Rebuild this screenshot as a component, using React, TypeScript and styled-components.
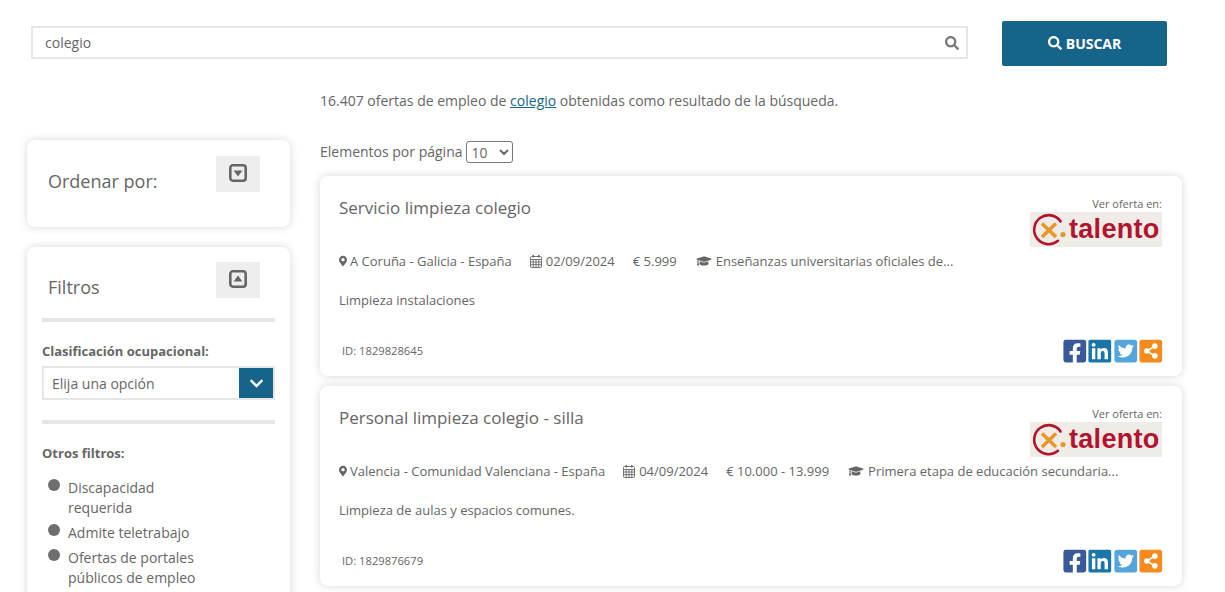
import React from 'react';
import styled, { createGlobalStyle } from 'styled-components';
import {
  FaSearch,
  FaMapMarkerAlt,
  FaGraduationCap,
  FaFacebookSquare,
  FaLinkedin,
  FaTwitterSquare,
  FaShareAltSquare,
  FaChevronDown,
} from 'react-icons/fa';

const GlobalStyle = createGlobalStyle`
  html, body {
    margin: 0;
    padding: 0;
    background: #fff;
    overflow: hidden;
  }
  body {
    font-family: "Open Sans", "Liberation Sans", sans-serif;
    font-size: 13px;
    color: #666;
  }
`;

const Page = styled.div`
  width: 1225px;
  height: 592px;
  overflow: hidden;
  box-sizing: border-box;
  padding-top: 21px;
`;

const SearchRow = styled.div`
  display: flex;
  align-items: flex-start;
  gap: 34px;
  margin-left: 31px;
`;

const SearchBox = styled.div`
  width: 937px;
  height: 33px;
  margin-top: 5px;
  box-sizing: border-box;
  border: 2px solid #e6e6e6;
  display: flex;
  align-items: center;
  justify-content: space-between;
  padding: 0 7px 0 12px;
  font-size: 14px;
  svg {
    width: 14px;
    height: 14px;
    color: #777;
  }
`;

const SearchButton = styled.button`
  width: 165px;
  height: 45px;
  border: 0;
  border-radius: 2px;
  background: #17648a;
  color: #fff;
  font-family: inherit;
  font-size: 14px;
  font-weight: 700;
  display: flex;
  align-items: center;
  justify-content: center;
  gap: 4px;
  padding-bottom: 2px;
  svg {
    width: 14px;
    height: 14px;
  }
`;

const Columns = styled.div`
  display: flex;
  gap: 30px;
  margin-left: 27px;
`;

const Sidebar = styled.aside`
  width: 263px;
  padding-top: 74px;
  display: flex;
  flex-direction: column;
  gap: 20px;
`;

const SideCard = styled.section<{ $top: number }>`
  background: #fff;
  border-radius: 8px;
  box-shadow: 0 0 8px rgba(0, 0, 0, 0.16);
  padding: ${(p) => p.$top}px 15px 20px;
  min-height: 87px;
  box-sizing: border-box;
`;

const SideHeader = styled.div`
  display: flex;
  justify-content: space-between;
  align-items: flex-start;
  padding: 0 15px 0 6px;
`;

const SideTitle = styled.h2`
  margin: 0;
  padding-top: 13px;
  font-size: 18px;
  font-weight: 400;
  line-height: 24px;
  color: #666;
`;

const ToggleButton = styled.div`
  width: 44px;
  height: 36px;
  background: #eeeeee;
  display: flex;
  justify-content: center;
  padding-top: 8px;
  box-sizing: border-box;
  svg {
    width: 18px;
    height: 18px;
  }
`;

const Rule = styled.hr<{ $top: number }>`
  border: 0;
  height: 4px;
  background: #e6e6e6;
  margin: ${(p) => p.$top}px 0 0;
`;

const FieldLabel = styled.div`
  margin-top: 20px;
  font-size: 13px;
  line-height: 18px;
  font-weight: 700;
`;

const SelectBox = styled.div`
  margin-top: 6px;
  height: 34px;
  box-sizing: border-box;
  border: 2px solid #e6e6e6;
  display: flex;
  align-items: center;
  justify-content: space-between;
  padding-left: 8px;
  font-size: 14px;
`;

const SelectArrow = styled.span`
  width: 34px;
  height: 30px;
  background: #17648a;
  color: #fff;
  display: flex;
  align-items: center;
  justify-content: center;
  svg {
    width: 15px;
    height: 15px;
  }
`;

const FilterList = styled.ul`
  list-style: none;
  margin: 16px 0 0;
  padding: 0 0 0 26px;
`;

const FilterItem = styled.li`
  position: relative;
  width: 150px;
  font-size: 14px;
  line-height: 20px;
  margin-bottom: 5px;
  &::before {
    content: '';
    position: absolute;
    left: -20px;
    top: 1px;
    width: 12px;
    height: 12px;
    border-radius: 50%;
    background: #6e6e6e;
  }
`;

const Results = styled.main`
  width: 862px;
`;

const ResultCount = styled.p`
  margin: 24px 0 0;
  font-size: 14px;
  line-height: 22px;
  a {
    color: #17648a;
    text-decoration: underline;
  }
`;

const PerPage = styled.div`
  margin-top: 28px;
  display: flex;
  align-items: center;
  gap: 3px;
  height: 22px;
  font-size: 14px;
`;

const PerPageSelect = styled.select`
  width: 47px;
  height: 22px;
  margin-top: 2px;
  font-family: inherit;
  font-size: 14px;
  color: #666;
  background: #fff;
  border: 1px solid #777;
  border-radius: 3px;
  padding-left: 1px;
`;

const OfferList = styled.div`
  margin-top: 14px;
  display: flex;
  flex-direction: column;
  gap: 10px;
`;

const OfferCard = styled.article`
  height: 200px;
  box-sizing: border-box;
  border-radius: 8px;
  background: #fff;
  box-shadow: 0 0 8px rgba(0, 0, 0, 0.16);
  padding: 20px 20px 12px 19px;
  display: flex;
  flex-direction: column;
`;

const OfferTop = styled.div`
  display: flex;
  justify-content: space-between;
  height: 53px;
`;

const OfferTitle = styled.h3`
  margin: 0;
  font-size: 17px;
  font-weight: 400;
  line-height: 24px;
  color: #666;
`;

const Source = styled.div`
  width: 132px;
  text-align: right;
  font-size: 11px;
  line-height: 15px;
`;

const Logo = styled.div`
  margin-top: 1px;
  height: 35px;
  background: #efebe6;
  display: flex;
  align-items: center;
  padding-left: 2px;
  svg {
    width: 34px;
    height: 34px;
    flex: none;
  }
`;

const LogoText = styled.span`
  margin-left: 3px;
  font-family: "Liberation Sans", sans-serif;
  font-weight: 700;
  font-size: 27px;
  line-height: 35px;
  letter-spacing: 0.3px;
  color: #b2132e;
`;

const MetaRow = styled.div`
  display: flex;
  align-items: center;
  gap: 18px;
  height: 24px;
  font-size: 13px;
  svg {
    margin-right: 4px;
    vertical-align: -1px;
  }
`;

const MetaPin = styled.span`
  svg {
    width: 8px;
    height: 12px;
    margin-right: 3px;
  }
`;

const MetaDate = styled.span`
  svg {
    width: 12px;
    height: 13px;
    margin-right: 4px;
    vertical-align: -2px;
  }
`;

const MetaCap = styled.span`
  margin-left: 1px;
  svg {
    width: 16px;
    height: 12px;
  }
`;

const Description = styled.p`
  margin: 17px 0 0;
  font-size: 13px;
  line-height: 20px;
`;

const OfferFooter = styled.div`
  margin-top: auto;
  display: flex;
  justify-content: space-between;
  align-items: center;
`;

const OfferId = styled.span`
  margin: 0 0 2px 3px;
  font-size: 11.2px;
`;

const Shares = styled.div`
  display: flex;
  margin-right: -2px;
  height: 26px;
  svg {
    width: 25.6px;
    height: 26px;
  }
`;

type Offer = {
  title: string;
  place: string;
  date: string;
  salary: string;
  study: string;
  text: string;
  id: string;
};

const offers: Offer[] = [
  {
    title: 'Servicio limpieza colegio',
    place: 'A Coruña - Galicia - España',
    date: '02/09/2024',
    salary: '€ 5.999',
    study: 'Enseñanzas universitarias oficiales de...',
    text: 'Limpieza instalaciones',
    id: '1829828645',
  },
  {
    title: 'Personal limpieza colegio - silla',
    place: 'Valencia - Comunidad Valenciana - España',
    date: '04/09/2024',
    salary: '€ 10.000 - 13.999',
    study: 'Primera etapa de educación secundaria...',
    text: 'Limpieza de aulas y espacios comunes.',
    id: '1829876679',
  },
];

const LogoMark = () => (
  <svg viewBox="0 0 34 34">
    <path d="M28.6 8.4 A14.5 14.5 0 1 0 26 27.8" fill="none" stroke="#b2132e" strokeWidth="2.6" strokeLinecap="round" />
    <path d="M10 10.5 L24 24 M24 10.5 L10 24" stroke="#e8962a" strokeWidth="3.6" />
    <circle cx="31" cy="21.5" r="2.6" fill="#e8962a" />
  </svg>
);

const CalendarIcon = () => (
  <svg viewBox="0 0 12 13" fill="none" stroke="#666" strokeWidth="0.9">
    <rect x="0.5" y="1.5" width="11" height="11" rx="1" />
    <path d="M0.5 4.5 H11.5 M0.5 7 H11.5 M0.5 9.7 H11.5 M3.2 4.5 V12.5 M6 4.5 V12.5 M8.8 4.5 V12.5" />
    <path d="M3.2 0 V2.6 M8.8 0 V2.6" strokeWidth="1.4" />
  </svg>
);

const CaretSquare = ({ up }: { up?: boolean }) => (
  <svg viewBox="0 0 18 18">
    <rect x="1.3" y="1.3" width="15.4" height="15.4" rx="2.6" fill="none" stroke="#666" strokeWidth="2.6" />
    <path d={up ? 'M9 5.4 L13.4 11.4 H4.6 Z' : 'M9 12.6 L4.6 6.6 H13.4 Z'} fill="#666" />
  </svg>
);

const App = () => (
  <Page>
    <GlobalStyle />
    <SearchRow>
      <SearchBox>
        colegio
        <FaSearch />
      </SearchBox>
      <SearchButton>
        <FaSearch />
        BUSCAR
      </SearchButton>
    </SearchRow>
    <Columns>
      <Sidebar>
        <SideCard $top={16}>
          <SideHeader>
            <SideTitle>Ordenar por:</SideTitle>
            <ToggleButton>
              <CaretSquare />
            </ToggleButton>
          </SideHeader>
        </SideCard>
        <SideCard $top={15}>
          <SideHeader>
            <SideTitle>Filtros</SideTitle>
            <ToggleButton>
              <CaretSquare up />
            </ToggleButton>
          </SideHeader>
          <Rule $top={19} />
          <FieldLabel>Clasificación ocupacional:</FieldLabel>
          <SelectBox>
            Elija una opción
            <SelectArrow>
              <FaChevronDown />
            </SelectArrow>
          </SelectBox>
          <Rule $top={20} />
          <FieldLabel>Otros filtros:</FieldLabel>
          <FilterList>
            <FilterItem>Discapacidad requerida</FilterItem>
            <FilterItem>Admite teletrabajo</FilterItem>
            <FilterItem>Ofertas de portales públicos de empleo</FilterItem>
          </FilterList>
        </SideCard>
      </Sidebar>
      <Results>
        <ResultCount>
          16.407 ofertas de empleo de <a href="#">colegio</a> obtenidas como resultado de la búsqueda.
        </ResultCount>
        <PerPage>
          Elementos por página
          <PerPageSelect defaultValue="10">
            <option>10</option>
          </PerPageSelect>
        </PerPage>
        <OfferList>
          {offers.map((offer) => (
            <OfferCard key={offer.id}>
              <OfferTop>
                <OfferTitle>{offer.title}</OfferTitle>
                <Source>
                  Ver oferta en:
                  <Logo>
                    <LogoMark />
                    <LogoText>talento</LogoText>
                  </Logo>
                </Source>
              </OfferTop>
              <MetaRow>
                <MetaPin>
                  <FaMapMarkerAlt />
                  {offer.place}
                </MetaPin>
                <MetaDate>
                  <CalendarIcon />
                  {offer.date}
                </MetaDate>
                <span>{offer.salary}</span>
                <MetaCap>
                  <FaGraduationCap />
                  {offer.study}
                </MetaCap>
              </MetaRow>
              <Description>{offer.text}</Description>
              <OfferFooter>
                <OfferId>ID: {offer.id}</OfferId>
                <Shares>
                  <FaFacebookSquare color="#3b5998" />
                  <FaLinkedin color="#1a75a8" />
                  <FaTwitterSquare color="#55a5dc" />
                  <FaShareAltSquare color="#f58a1f" />
                </Shares>
              </OfferFooter>
            </OfferCard>
          ))}
        </OfferList>
      </Results>
    </Columns>
  </Page>
);

export default App;
